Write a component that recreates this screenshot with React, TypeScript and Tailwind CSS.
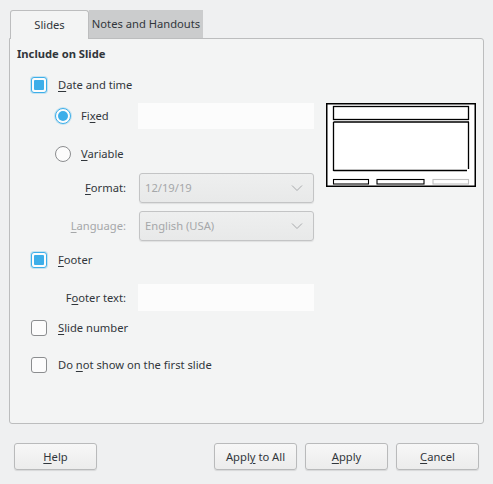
import React from "react";

const U = ({ children }: { children: React.ReactNode }) => (
  <span className="underline underline-offset-[2px] decoration-[1px]">{children}</span>
);

const Check = ({ checked }: { checked?: boolean }) =>
  checked ? (
    <div className="w-[16px] h-[16px] rounded-[3px] border border-[#3daee9] bg-[#fcfcfc] flex items-center justify-center shrink-0 shadow-[0_0_0_1px_rgba(61,174,233,0.25)]">
      <div className="w-[10px] h-[10px] bg-[#3daee9] rounded-[1px]" />
    </div>
  ) : (
    <div className="w-[16px] h-[16px] rounded-[3px] border border-[#8b8d8f] bg-[#fcfcfc] shrink-0" />
  );

const Radio = ({ checked }: { checked?: boolean }) =>
  checked ? (
    <div className="w-[16px] h-[16px] rounded-full border border-[#3daee9] bg-[#fcfcfc] flex items-center justify-center shrink-0 shadow-[0_0_0_1px_rgba(61,174,233,0.25)]">
      <div className="w-[10px] h-[10px] bg-[#3daee9] rounded-full" />
    </div>
  ) : (
    <div className="w-[16px] h-[16px] rounded-full border border-[#8b8d8f] bg-[#fcfcfc] shrink-0" />
  );

const Chevron = () => (
  <svg width="12" height="8" viewBox="0 0 12 8" className="shrink-0">
    <path d="M1 1.5 L6 6.5 L11 1.5" fill="none" stroke="#a8aaac" strokeWidth="1" />
  </svg>
);

const Select = ({ value }: { value: string }) => (
  <div className="w-[175px] h-[30px] rounded-[3px] border border-[#c3c4c5] bg-gradient-to-b from-[#eeefef] to-[#e8e9e9] flex items-center justify-between pl-[5px] pr-[10px] text-[#a5a7a9] shadow-[0_1px_1px_rgba(0,0,0,0.08)]">
    <span>{value}</span>
    <Chevron />
  </div>
);

const Btn = ({ children }: { children: React.ReactNode }) => (
  <div className="w-[83px] h-[27px] rounded-[3px] border border-[#b9babb] bg-gradient-to-b from-[#f7f7f7] to-[#ececec] flex items-center justify-center text-[#31363b] shadow-[0_1px_1px_rgba(0,0,0,0.1)]">
    <span className="whitespace-pre">{children}</span>
  </div>
);

export default function App() {
  return (
    <div
      className="w-[493px] h-[484px] bg-[#eff0f1] text-[#31363b] text-[11.2px] leading-[16px] overflow-hidden"
      style={{ fontFamily: '"Noto Sans", "DejaVu Sans", sans-serif' }}
    >
      {/* Tabs */}
      <div className="flex pl-[10px] pt-[10px] relative z-10">
        <div className="w-[79px] h-[29px] border border-b-0 border-[#bcbdbe] rounded-t-[3px] bg-[#f3f4f4] flex items-center justify-center whitespace-nowrap">
          Slides
        </div>
        <div className="w-[114px] h-[28px] bg-[#cbcccd] flex items-center justify-center whitespace-nowrap">
          Notes and Handouts
        </div>
      </div>
      {/* Panel */}
      <div className="ml-[9px] w-[475px] h-[386px] -mt-[1px] border border-[#bcbdbe] rounded-b-[3px] rounded-tr-[3px] bg-[#f3f4f4] flex">
        <div className="flex flex-col w-[305px]">
          <div className="mt-[7px] ml-[7px] h-[16px] flex items-center font-bold">Include on Slide</div>

          <div className="mt-[15px] ml-[21px] h-[16px] flex items-center gap-[11px]">
            <Check checked />
            <span>
              <U>D</U>ate and time
            </span>
          </div>

          <div className="mt-[10px] ml-[45px] h-[26px] flex items-center">
            <div className="w-[83px] flex items-center gap-[10px]">
              <Radio checked />
              <span>
                Fi<U>x</U>ed
              </span>
            </div>
            <div className="w-[176px] h-[26px] bg-[#fcfcfc]" />
          </div>

          <div className="mt-[17px] ml-[45px] h-[16px] flex items-center gap-[10px]">
            <Radio />
            <span>
              <U>V</U>ariable
            </span>
          </div>

          <div className="mt-[11px] h-[30px] flex items-center">
            <div className="w-[116px] text-right">
              <U>F</U>ormat:
            </div>
            <div className="ml-[13px]">
              <Select value="12/19/19" />
            </div>
          </div>

          <div className="mt-[8px] h-[30px] flex items-center">
            <div className="w-[116px] text-right text-[#a5a7a9]">
              <U>L</U>anguage:
            </div>
            <div className="ml-[13px]">
              <Select value="English (USA)" />
            </div>
          </div>

          <div className="mt-[11px] ml-[21px] h-[16px] flex items-center gap-[11px]">
            <Check checked />
            <span>
              <U>F</U>ooter
            </span>
          </div>

          <div className="mt-[16px] h-[27px] flex items-center">
            <div className="w-[116px] text-right">
              F<U>o</U>oter text:
            </div>
            <div className="ml-[12px] w-[176px] h-[27px] bg-[#fcfcfc]" />
          </div>

          <div className="mt-[9px] ml-[21px] h-[16px] flex items-center gap-[11px]">
            <Check />
            <span>
              <U>S</U>lide number
            </span>
          </div>

          <div className="mt-[21px] ml-[21px] h-[16px] flex items-center gap-[11px]">
            <Check />
            <span>
              Do <U>n</U>ot show on the first slide
            </span>
          </div>
        </div>

        <div className="ml-[11px] mt-[64px]">
          <svg width="150" height="84" viewBox="0 0 150 84">
            <rect x="0.75" y="0.75" width="148.5" height="82.5" fill="#ffffff" stroke="#000" strokeWidth="1.5" />
            <rect x="7.5" y="3.5" width="135" height="13" fill="none" stroke="#000" strokeWidth="1.3" />
            <path d="M7.5 19 H143 M7.5 19 V68 M7.5 67.5 H141 M142.5 19 V66" fill="none" stroke="#000" strokeWidth="1.3" />
            <rect x="7.5" y="76.5" width="35" height="4.5" fill="none" stroke="#000" strokeWidth="1.1" />
            <rect x="51" y="76.5" width="47" height="4.5" fill="none" stroke="#000" strokeWidth="1.1" />
            <rect x="107" y="76.5" width="35.5" height="4.5" fill="none" stroke="#c0c0c0" strokeWidth="1.1" />
          </svg>
        </div>
      </div>

      {/* Buttons */}
      <div className="flex mt-[19px] pl-[14px] pr-[14px]">
        <Btn>
          <U>H</U>elp
        </Btn>
        <div className="flex-1" />
        <div className="flex gap-[8px]">
          <Btn>
            Appl<U>y</U> to All
          </Btn>
          <Btn>
            <U>A</U>pply
          </Btn>
          <Btn>
            <U>C</U>ancel
          </Btn>
        </div>
      </div>
    </div>
  );
}
